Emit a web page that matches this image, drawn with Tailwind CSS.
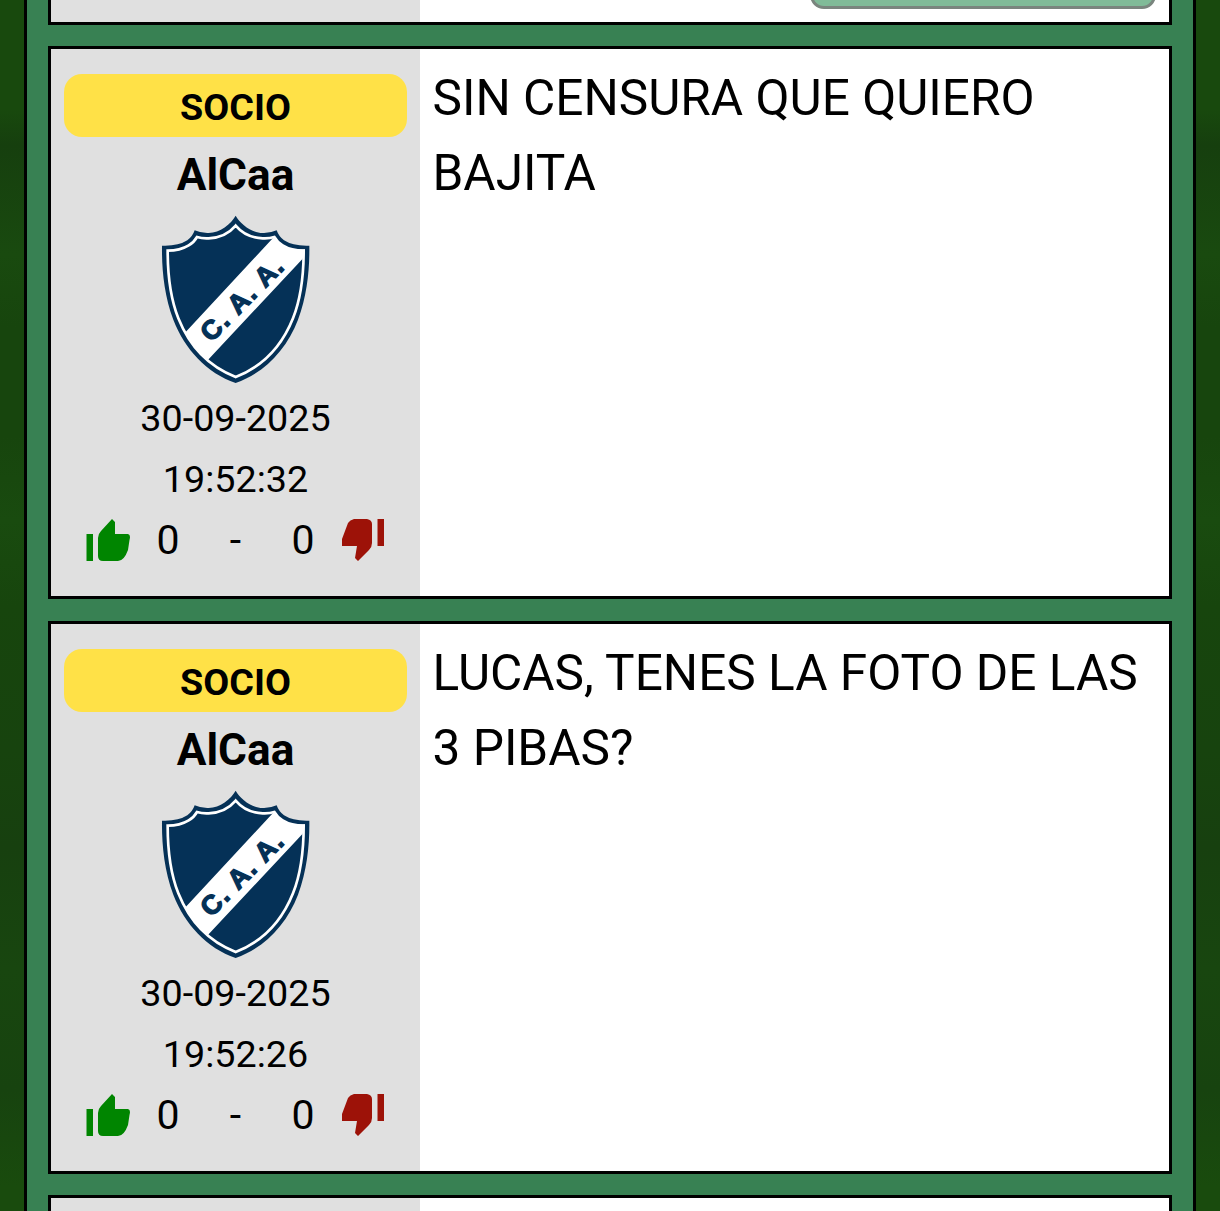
<!DOCTYPE html>
<html lang="es">
<head>
<meta charset="utf-8">
<title>Comentarios</title>
<script src="https://cdn.jsdelivr.net/npm/@tailwindcss/browser@4"></script>
</head>
<body class="h-[1211px] overflow-hidden bg-[linear-gradient(180deg,#18490d_0%,#18490d_9%,#163f0e_12%,#194a0f_21%,#17450d_27%,#17450d_36%,#194b0f_43%,#17450d_50%,#17430e_62%,#17400f_70%,#18460f_80%,#17430f_90%,#194b0d_98%)] font-[Roboto,sans-serif] text-black">
<svg class="hidden">
  <symbol id="crest" viewBox="0 24 513 522">
    <path fill="#053157" d="M257 32C271 57 304 83 338 84Q360 85 380 76Q386 94 402 106Q430 124 478 122C479 190 472 270 444 344C410 433 343 504 257 534C171 504 104 433 70 344C42 270 35 190 36 122Q84 124 112 106Q128 94 134 76Q154 85 176 84C210 83 243 57 257 32Z"/>
    <path fill="none" stroke="#fff" stroke-width="8" d="M257 62C278 87 308 99 338 100Q358 101 373 96Q381 111 398 121Q424 137 461 137C461 200 456 272 429 340C397 420 340 484 257 516C174 484 117 420 85 340C58 272 53 200 53 137Q90 137 116 121Q133 111 141 96Q156 101 176 100C206 99 236 87 257 62Z"/>
    <path fill="#fff" d="M371 97Q381 111 398 121Q424 137 465 133L458 161L173 466Q132 432 105 383Z"/>
    <text transform="translate(184 414) rotate(-45.3)" font-family="Liberation Sans" font-weight="700" font-size="80" fill="#053157" stroke="#053157" stroke-width="4" textLength="315" lengthAdjust="spacing">C. A. A.</text>
  </symbol>
  <symbol id="up" viewBox="0 0 44 42">
    <path d="M.5 15H7V42H.5ZM26 0L29 3V15H42Q45 16 43.500 21L42 31Q38 42 32 42H17Q12 42 12 37V19Q12 15 15 12Z"/>
  </symbol>
  <symbol id="down" viewBox="0 0 44 42">
    <path d="M36.500 0H43V27H36.500ZM13 0H26Q31 1 31 5V24Q31 28 28 31L17 42L14 39L16 27H1V20L7 4Q9 1 13 0Z"/>
  </symbol>
</svg>
<main class="mx-6 flex h-[1211px] flex-col border-x-3 border-black bg-[#388153] px-[21px]">
  <article class="flex h-[25px] shrink-0 border-x-3 border-b-3 border-black bg-white">
    <div class="w-[369px] bg-[#e0e0e0]"></div>
    <div class="relative flex-1 overflow-hidden">
      <button class="absolute -top-12 right-[13.5px] h-[57px] w-[346px] rounded-[14px] border-3 border-[#7a857e] bg-[#80bb98]" aria-label="Responder"></button>
    </div>
  </article>
  <article class="mt-[21px] flex h-[553px] shrink-0 border-3 border-black bg-white">
    <aside class="flex w-[369px] shrink-0 flex-col items-center bg-[#e0e0e0] px-[13px] pt-[25px]">
      <div class="flex h-[63px] w-full items-center justify-center rounded-[18px] bg-[#ffe147] pt-1 text-[37.7px] font-bold"><span>SOCIO</span></div>
      <div class="h-[76px] text-[44.2px] leading-[76px] font-bold">AlCaa</div>
      <svg class="h-[174px] w-[171px] shrink-0"><use href="#crest"/></svg>
      <div class="h-[61px] text-[37.7px] leading-[62px]">30-09-2025</div>
      <div class="h-[61px] text-[37.7px] leading-[62px]">19:52:32</div>
      <div class="flex h-[62px] w-full items-center justify-between px-[22px] text-[41px]">
        <svg class="h-[42px] w-11 fill-[#008500]"><use href="#up"/></svg><span class="pt-0.5">0</span><span class="px-6 pt-0.5">-</span><span class="pt-0.5">0</span><svg class="h-[42px] w-11 fill-[#9d1208]"><use href="#down"/></svg>
      </div>
    </aside>
    <p class="px-[12.5px] pt-3 text-[49.55px] leading-[75px]">SIN CENSURA QUE QUIERO<br>BAJITA</p>
  </article>
  <article class="mt-[22px] flex h-[553px] shrink-0 border-3 border-black bg-white">
    <aside class="flex w-[369px] shrink-0 flex-col items-center bg-[#e0e0e0] px-[13px] pt-[25px]">
      <div class="flex h-[63px] w-full items-center justify-center rounded-[18px] bg-[#ffe147] pt-1 text-[37.7px] font-bold"><span>SOCIO</span></div>
      <div class="h-[76px] text-[44.2px] leading-[76px] font-bold">AlCaa</div>
      <svg class="h-[174px] w-[171px] shrink-0"><use href="#crest"/></svg>
      <div class="h-[61px] text-[37.7px] leading-[62px]">30-09-2025</div>
      <div class="h-[61px] text-[37.7px] leading-[62px]">19:52:26</div>
      <div class="flex h-[62px] w-full items-center justify-between px-[22px] text-[41px]">
        <svg class="h-[42px] w-11 fill-[#008500]"><use href="#up"/></svg><span class="pt-0.5">0</span><span class="px-6 pt-0.5">-</span><span class="pt-0.5">0</span><svg class="h-[42px] w-11 fill-[#9d1208]"><use href="#down"/></svg>
      </div>
    </aside>
    <p class="px-[12.5px] pt-3 text-[49.55px] leading-[75px]">LUCAS, TENES LA FOTO DE LAS<br>3 PIBAS?</p>
  </article>
  <article class="mt-[21px] flex h-4 shrink-0 border-x-3 border-t-3 border-black bg-white">
    <div class="w-[369px] bg-[#e0e0e0]"></div>
  </article>
</main>
</body>
</html>
